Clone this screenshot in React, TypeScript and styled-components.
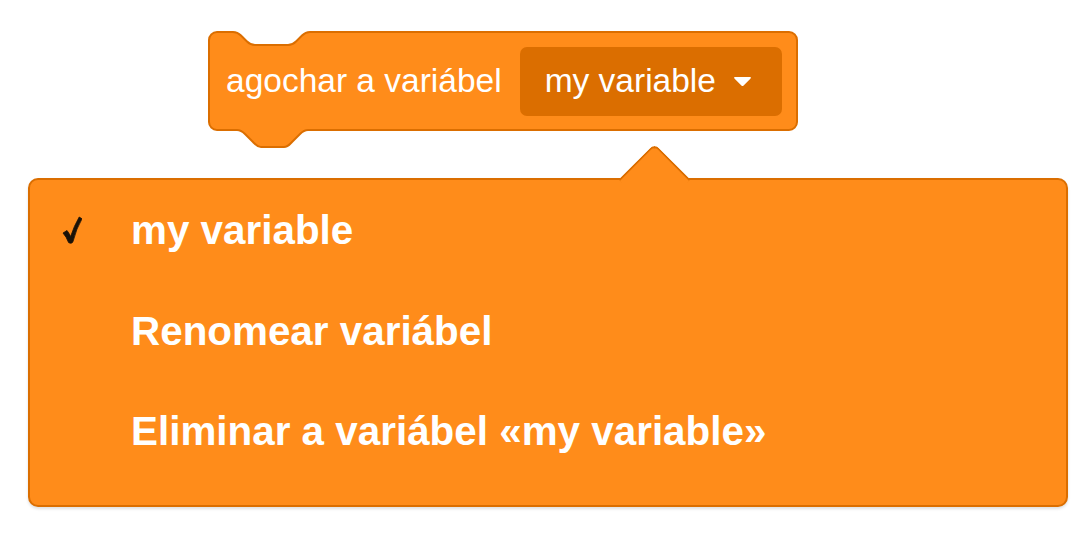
import React from 'react';
import styled, { createGlobalStyle } from 'styled-components';

const GlobalStyle = createGlobalStyle`
  html, body {
    margin: 0;
    padding: 0;
    background: #ffffff;
  }
  body {
    font-family: "Liberation Sans", Arial, sans-serif;
  }
`;

const Page = styled.div`
  width: 1084px;
  height: 546px;
  padding-top: 31px;
  box-sizing: border-box;
  overflow: hidden;
`;

const Block = styled.div`
  position: relative;
  margin-left: 208px;
  width: 590px;
  height: 100px;
  box-sizing: border-box;
  padding: 0 16px 0 18px;
  display: flex;
  align-items: center;
  gap: 18px;
`;

const BlockShape = styled.svg`
  position: absolute;
  top: 0;
  left: 0;
  z-index: 0;
  overflow: visible;
`;

const BlockLabel = styled.span`
  position: relative;
  z-index: 1;
  color: #ffffff;
  font-size: 33.5px;
  white-space: nowrap;
`;

const Field = styled.div`
  position: relative;
  z-index: 1;
  flex: 1;
  height: 69px;
  box-sizing: border-box;
  padding: 0 30px 0 25px;
  display: flex;
  align-items: center;
  justify-content: space-between;
  background: #db6e00;
  border-radius: 7px;
  color: #ffffff;
  font-size: 33.5px;
  white-space: nowrap;
`;

const Menu = styled.div`
  position: relative;
  margin: 47px 0 0 28px;
  width: 1040px;
  height: 329px;
  box-sizing: border-box;
  padding: 0 0 23px 32px;
  background: #ff8c1a;
  border: 2px solid #db6e00;
  border-radius: 10px;
  box-shadow: 0 2px 3px rgba(0, 0, 0, 0.12);
  display: flex;
  flex-direction: column;

  &::before {
    content: '';
    position: absolute;
    left: 599px;
    top: -26px;
    width: 51px;
    height: 51px;
    background: #ff8c1a;
    border-top: 2px solid #db6e00;
    border-left: 2px solid #db6e00;
    border-top-left-radius: 7px;
    transform: rotate(45deg);
    box-sizing: border-box;
  }
`;

const MenuItem = styled.div`
  position: relative;
  height: 101px;
  display: flex;
  align-items: center;
  color: #ffffff;
  font-size: 40.4px;
  font-weight: bold;
  white-space: nowrap;
`;

const CheckCell = styled.span`
  width: 69px;
  flex: none;
  display: flex;
  align-items: center;
`;

const CheckMark = () => (
  <svg width="20" height="28" viewBox="0 0 20 28">
    <path
      d="M1 17 L5 14.5 Q7 17 8.6 20.5 Q12 10 17.2 1 L20 2.8 Q14.5 12 11 25.5 Q10.4 27.6 8.2 27.2 L6.6 26.6 Q4.6 21 1 17 Z"
      fill="#1a1208"
      stroke="#1a1208"
      strokeWidth="0.8"
      strokeLinejoin="round"
    />
  </svg>
);

const Caret = () => (
  <svg width="19" height="11" viewBox="0 0 19 11">
    <path
      d="M2 1 H17 Q18.6 1 17.6 2.4 L10.6 9.4 Q9.5 10.5 8.4 9.4 L1.4 2.4 Q0.4 1 2 1 Z"
      fill="#ffffff"
    />
  </svg>
);

const blockPath =
  'M1 9 A8 8 0 0 1 9 1 H25 c4 0 6 1.5 8 3.5 l6 6 c2 2 4 3.5 8 3.5 H80 ' +
  'c4 0 6 -1.5 8 -3.5 l6 -6 c2 -2 4 -3.5 8 -3.5 H581 A8 8 0 0 1 589 9 V91 ' +
  'A8 8 0 0 1 581 99 H100 c-4 0 -6 2 -8 4 l-8 8 c-2 2 -4 5 -8 5 H53 ' +
  'c-4 0 -6 -3 -8 -5 l-8 -8 c-2 -2 -4 -4 -8 -4 H9 A8 8 0 0 1 1 91 Z';

const items = [
  { label: 'my variable', checked: true },
  { label: 'Renomear variábel', checked: false },
  { label: 'Eliminar a variábel «my variable»', checked: false },
];

const App: React.FunctionComponent = () => {
  return (
    <Page>
      <GlobalStyle />
      <Block>
        <BlockShape width="590" height="118" viewBox="0 0 590 118">
          <path d={blockPath} fill="#ff8c1a" stroke="#db6e00" strokeWidth="2" />
        </BlockShape>
        <BlockLabel>agochar a variábel</BlockLabel>
        <Field>
          <span>my variable</span>
          <Caret />
        </Field>
      </Block>
      <Menu>
        {items.map((item) => (
          <MenuItem key={item.label}>
            <CheckCell>{item.checked && <CheckMark />}</CheckCell>
            {item.label}
          </MenuItem>
        ))}
      </Menu>
    </Page>
  );
};

export default App;
